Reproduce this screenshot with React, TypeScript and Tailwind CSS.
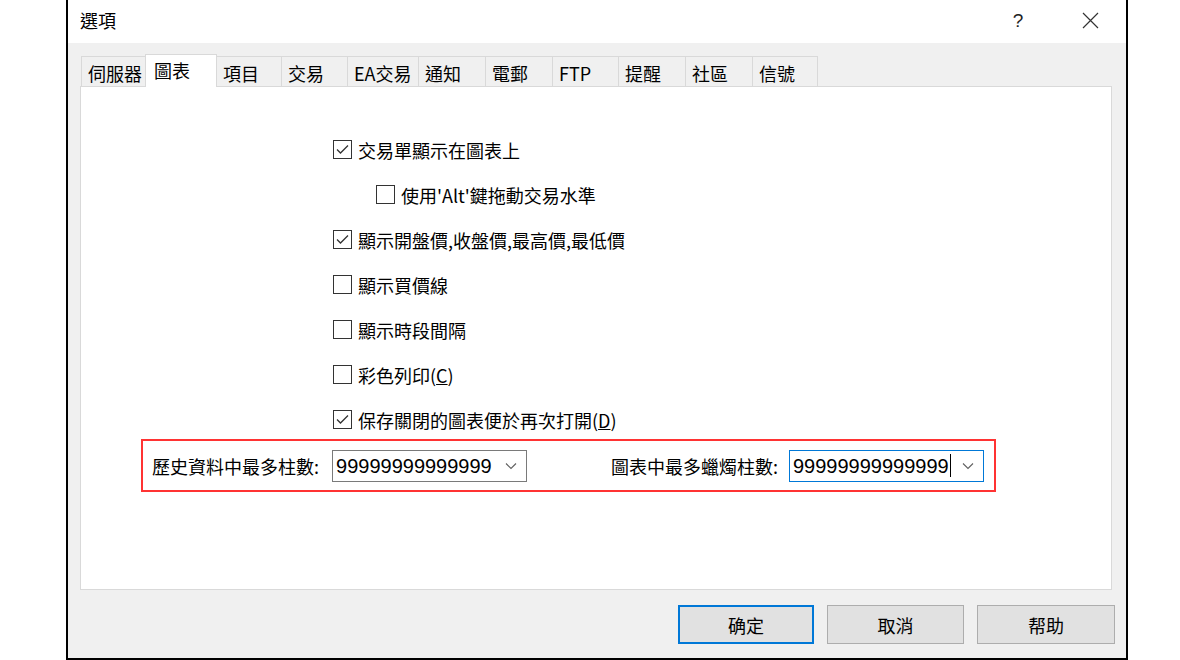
import React from 'react';

const cjk = "font-['Noto_Sans_CJK_TC','Noto_Sans',sans-serif]";

const tabs = [
  { label: '伺服器', w: 'w-[65px]' },
  { label: '圖表', w: 'w-[72px]', active: true },
  { label: '項目', w: 'w-[65px]' },
  { label: '交易', w: 'w-[66px]' },
  { label: 'EA交易', w: 'w-[71px]' },
  { label: '通知', w: 'w-[67px]' },
  { label: '電郵', w: 'w-[67px]' },
  { label: 'FTP', w: 'w-[66px]' },
  { label: '提醒', w: 'w-[67px]' },
  { label: '社區', w: 'w-[67px]' },
  { label: '信號', w: 'w-[66px]' },
];

const CheckBox: React.FC<{ checked?: boolean }> = ({ checked }) => (
  <span className="w-[19px] h-[19px] shrink-0 border border-[#333333] bg-white flex items-center justify-center">
    {checked && (
      <svg width="17" height="17" viewBox="0 0 17 17">
        <polyline points="3,8.5 6.5,12 14,4.5" fill="none" stroke="#333333" strokeWidth="1.3" />
      </svg>
    )}
  </span>
);

const Row: React.FC<{ checked?: boolean; indent?: boolean; children: React.ReactNode }> = ({ checked, indent, children }) => (
  <div className={`h-[45px] flex items-center gap-[6px] ${indent ? 'pl-[295px]' : 'pl-[252px]'}`}>
    <CheckBox checked={checked} />
    <span className="text-[18px] leading-none text-black whitespace-nowrap">{children}</span>
  </div>
);

const Chevron = () => (
  <svg width="12" height="8" viewBox="0 0 12 8">
    <polyline points="1,1.5 6,6.5 11,1.5" fill="none" stroke="#606060" strokeWidth="1.1" />
  </svg>
);

const Combo: React.FC<{ focused?: boolean }> = ({ focused }) => (
  <div
    className={`w-[195px] h-[32px] bg-white border flex items-center pl-[3px] pr-[9px] ${
      focused ? 'border-[#0078d7]' : 'border-[#7a7a7a]'
    }`}
  >
    <span className="font-['Liberation_Sans',sans-serif] text-[20px] leading-none text-black">99999999999999</span>
    {focused && <span className="w-px h-[23px] bg-black ml-[1px]" />}
    <span className="ml-auto flex items-center">
      <Chevron />
    </span>
  </div>
);

export default function App() {
  return (
    <div className={`w-[1180px] h-[660px] bg-white overflow-hidden ${cjk}`}>
      <div className="ml-[66px] w-[1062px] h-[660px] border-x-2 border-b-2 border-black flex flex-col">
        {/* Title bar */}
        <div className="h-[43px] bg-white flex items-center pl-[12px] pb-[3px] shrink-0">
          <span className="text-[18px] leading-none text-black">選項</span>
          <span className="ml-auto w-[20px] text-center font-['Liberation_Sans',sans-serif] text-[19px] leading-none text-[#222]">?</span>
          <span className="ml-[54px] mr-[27px] flex items-center">
            <svg width="17" height="17" viewBox="0 0 17 17">
              <path d="M1 1 L16 16 M16 1 L1 16" stroke="#333" strokeWidth="1.2" />
            </svg>
          </span>
        </div>

        {/* Body */}
        <div className="flex-1 bg-[#f0f0f0] flex flex-col pl-[12px] pr-[14px]">
          {/* Tab strip */}
          <div className="h-[43px] flex items-end pl-[1px] shrink-0">
            {tabs.map((t, i) =>
              t.active ? (
                <div
                  key={t.label}
                  className={`${t.w} h-[33px] -mb-px -mx-[1px] relative z-10 bg-white border-x border-t border-[#d9d9d9] flex items-start pt-[6px] pl-[8px] text-[18px] leading-none text-black`}
                >
                  {t.label}
                </div>
              ) : (
                <div
                  key={t.label}
                  className={`${t.w} h-[30px] border-t border-l border-[#d9d9d9] ${
                    i === tabs.length - 1 ? 'border-r' : ''
                  } flex items-center pl-[6px] pt-[2px] text-[18px] leading-none text-black`}
                >
                  {t.label}
                </div>
              )
            )}
          </div>

          {/* Tab panel */}
          <div className="h-[504px] bg-white border border-[#d9d9d9] pt-[40px] shrink-0">
            <Row checked>交易單顯示在圖表上</Row>
            <Row indent>使用'Alt'鍵拖動交易水準</Row>
            <Row checked>顯示開盤價,收盤價,最高價,最低價</Row>
            <Row>顯示買價線</Row>
            <Row>顯示時段間隔</Row>
            <Row>
              彩色列印(<u>C</u>)
            </Row>
            <Row checked>
              保存關閉的圖表便於再次打開(<u>D</u>)
            </Row>

            <div className="-mt-[3px] ml-[60px] w-[855px] h-[53px] border-2 border-[#ff3333] flex items-center pl-[9px] pr-[10px]">
              <span className="text-[18px] leading-none text-black whitespace-nowrap">歷史資料中最多柱數:</span>
              <div className="ml-[13px]">
                <Combo />
              </div>
              <span className="ml-auto text-[18px] leading-none text-black whitespace-nowrap">圖表中最多蠟燭柱數:</span>
              <div className="ml-[11px]">
                <Combo focused />
              </div>
            </div>
          </div>

          {/* Buttons */}
          <div className="flex-1 flex items-start justify-end pt-[15px] gap-[13px] -mr-[3px]">
            <button className="w-[136px] h-[39px] bg-[#e1e1e1] border-2 border-[#0078d7] text-[18px] leading-none text-black">
              确定
            </button>
            <button className="w-[137px] h-[39px] bg-[#e1e1e1] border border-[#adadad] text-[18px] leading-none text-black">
              取消
            </button>
            <button className="w-[138px] h-[39px] bg-[#e1e1e1] border border-[#adadad] text-[18px] leading-none text-black">
              帮助
            </button>
          </div>
        </div>
      </div>
    </div>
  );
}
